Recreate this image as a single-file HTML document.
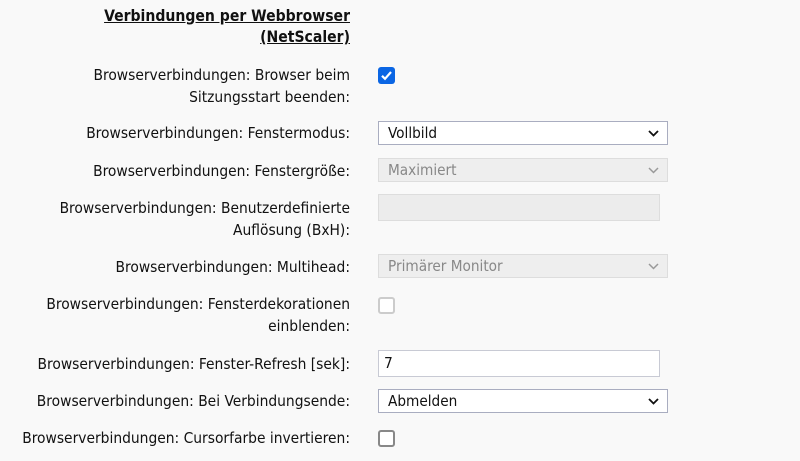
<!DOCTYPE html>
<html><head><meta charset="utf-8"><style>
*{box-sizing:border-box;margin:0;padding:0}
body{width:800px;height:461px;background:#f9f9f9;font-family:"DejaVu Sans Condensed","Liberation Sans",sans-serif;font-size:15.4px;color:#111;position:relative;overflow:hidden}
.l{position:absolute;right:450px;text-align:right;line-height:22px;white-space:nowrap}
.h{font-weight:bold;text-decoration:underline;font-size:15.6px}
.sel{position:absolute;left:378px;width:290px;height:24px;border:1px solid #a9adc0;background:#fff;padding-left:9px;line-height:22px;font-size:15.2px}
.sel.d{background:#eee;border-color:#ddd;color:#888}
.sel svg{position:absolute;right:8px;top:8px}
.inp{position:absolute;left:378px;width:282px;height:27px;border:1px solid #c8cad4;background:#fff;padding-left:5px;line-height:25px}
.inp.d{background:#ececec;border-color:#ddd}
.cb{position:absolute;left:378px;width:17px;height:17px;border:2px solid #888;border-radius:3px;background:#fff}
.cb.dis{border-color:#ccc}
.cb.on{background:#0b66e4;border:none}
</style></head><body>
<div class="l h" style="top:6px;line-height:21px">Verbindungen per Webbrowser<br>(NetScaler)</div>
<div class="l" style="top:64px">Browserverbindungen: Browser beim<br>Sitzungsstart beenden:</div>
<div class="cb on" style="top:67px"><svg width="17" height="17" viewBox="0 0 17 17"><path d="M4 8.8 L7 11.8 L13 5" stroke="#fff" stroke-width="2.2" fill="none"/></svg></div>
<div class="l" style="top:122px">Browserverbindungen: Fenstermodus:</div>
<div class="sel" style="top:121px">Vollbild<svg width="11" height="7" viewBox="0 0 11 7"><path d="M1 1 L5.5 5.5 L10 1" stroke="#111" stroke-width="1.8" fill="none"/></svg></div>
<div class="l" style="top:160px">Browserverbindungen: Fenstergröße:</div>
<div class="sel d" style="top:158px">Maximiert<svg width="11" height="7" viewBox="0 0 11 7"><path d="M1 1 L5.5 5.5 L10 1" stroke="#999" stroke-width="1.5" fill="none"/></svg></div>
<div class="l" style="top:197px">Browserverbindungen: Benutzerdefinierte<br>Auflösung (BxH):</div>
<div class="inp d" style="top:194px"></div>
<div class="l" style="top:256px">Browserverbindungen: Multihead:</div>
<div class="sel d" style="top:254px">Primärer Monitor<svg width="11" height="7" viewBox="0 0 11 7"><path d="M1 1 L5.5 5.5 L10 1" stroke="#999" stroke-width="1.5" fill="none"/></svg></div>
<div class="l" style="top:293px">Browserverbindungen: Fensterdekorationen<br>einblenden:</div>
<div class="cb dis" style="top:297px"></div>
<div class="l" style="top:353px">Browserverbindungen: Fenster-Refresh [sek]:</div>
<div class="inp" style="top:350px">7</div>
<div class="l" style="top:390px">Browserverbindungen: Bei Verbindungsende:</div>
<div class="sel" style="top:389px">Abmelden<svg width="11" height="7" viewBox="0 0 11 7"><path d="M1 1 L5.5 5.5 L10 1" stroke="#111" stroke-width="1.8" fill="none"/></svg></div>
<div class="l" style="top:427px">Browserverbindungen: Cursorfarbe invertieren:</div>
<div class="cb" style="top:430px"></div>
</body></html>
